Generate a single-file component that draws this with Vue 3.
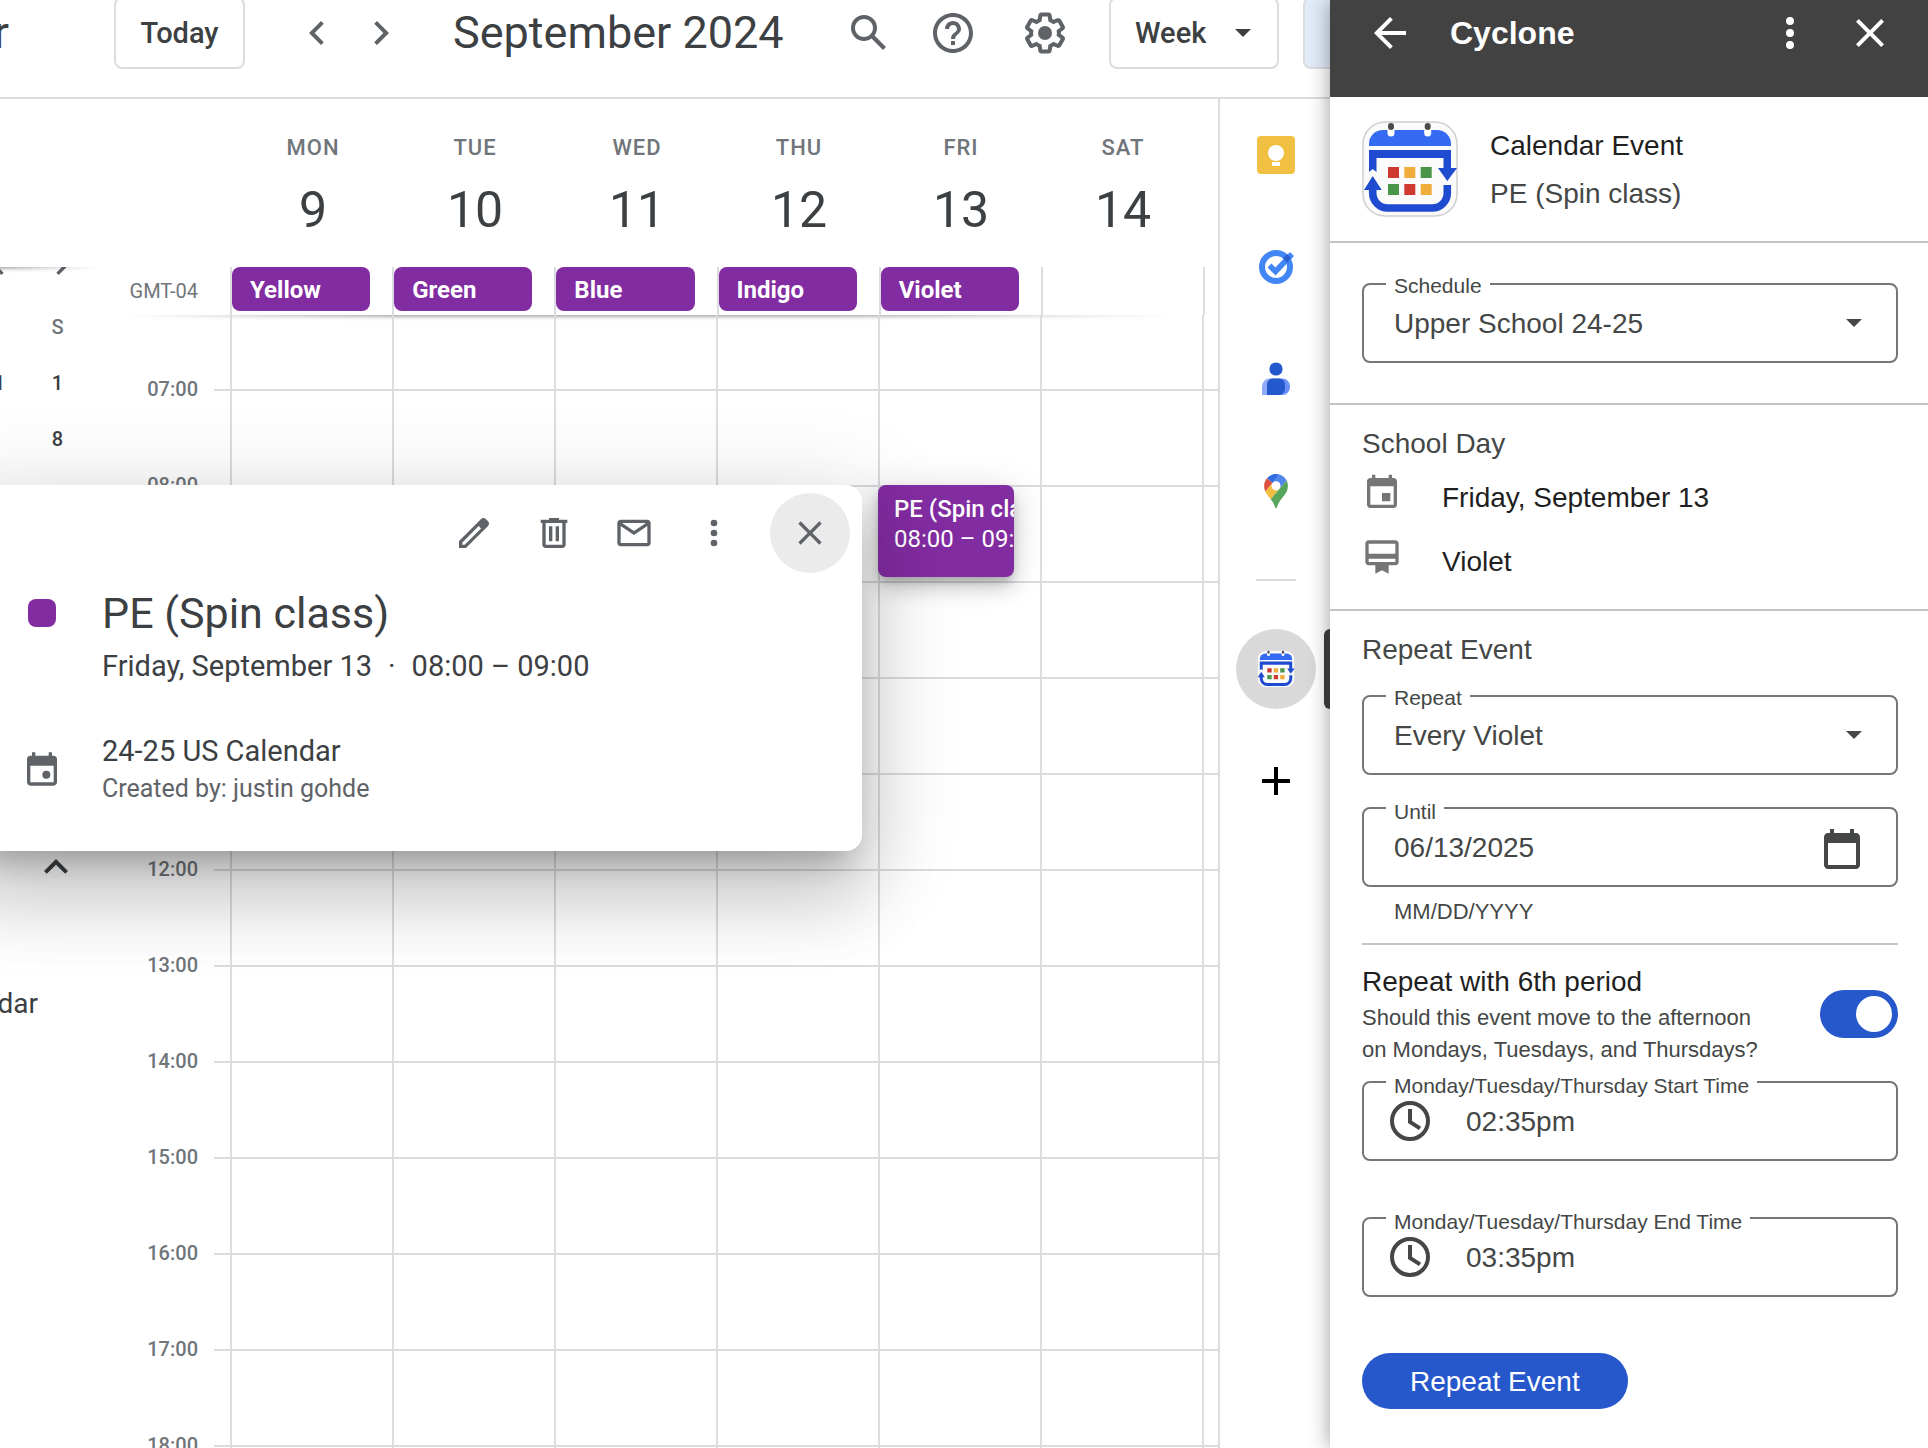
<script setup>
import { ref } from 'vue'

const days = [
  { name: 'MON', date: 9, cycle: 'Yellow' },
  { name: 'TUE', date: 10, cycle: 'Green' },
  { name: 'WED', date: 11, cycle: 'Blue' },
  { name: 'THU', date: 12, cycle: 'Indigo' },
  { name: 'FRI', date: 13, cycle: 'Violet', event: { title: 'PE (Spin class)', time: '08:00 – 09:00' } },
  { name: 'SAT', date: 14 },
]
const hours = Array.from({ length: 12 }, (_, i) => String(i + 7).padStart(2, '0') + ':00')

const view = ref('Week')
const schedule = ref('Upper School 24-25')
const repeat = ref('Every Violet')
const until = ref('06/13/2025')
const withSixth = ref(true)
const startTime = ref('02:35pm')
const endTime = ref('03:35pm')
</script>

<template>
  <div class="shell">
    <svg class="defs" aria-hidden="true">
      <symbol id="cyclone" viewBox="0 0 96 96">
        <rect x="1" y="1" width="94" height="94" rx="22" fill="#fbfbfb" stroke="#cfcfcf" stroke-width="1.5" />
        <path d="M7 25V23A14 14 0 0 1 21 9H75A14 14 0 0 1 89 23V25Z" fill="#356bf2" />
        <path d="M7 29H89V47H95L85.300 60 76 47H81.500V37H14.500V51L10.700 48 7 51Z" fill="#1f4bd0" />
        <path d="M10.700 66V72A15 15 0 0 0 25.700 87H70.300A15 15 0 0 0 85.300 72V64" fill="none" stroke="#1f4bd0" stroke-width="7.600" />
        <path d="M10.700 55 19.700 69H2Z" fill="#1f4bd0" />
        <path d="M29 6V12M65.700 6V12" stroke="#fff" stroke-width="7" stroke-linecap="round" />
        <path d="M29 5V6M65.700 5V6" stroke="#4a4a4a" stroke-width="6" stroke-linecap="round" />
        <path d="M26 46h11v11h-11zM42.300 63h11v11h-11z" fill="#cf3a30" />
        <path d="M42.300 46h11v11h-11zM58.700 63h11v11h-11z" fill="#f0ad3c" />
        <path d="M58.700 46h11v11h-11zM26 63h11v11h-11z" fill="#4a9648" />
      </symbol>
      <symbol id="chev-left" viewBox="0 0 24 24"><path d="M15.410 7.410 14 6l-6 6 6 6 1.410-1.410L10.830 12z" /></symbol>
      <symbol id="chev-right" viewBox="0 0 24 24"><path d="M8.590 16.590 13.170 12 8.590 7.410 10 6l6 6-6 6z" /></symbol>
      <symbol id="more" viewBox="0 0 24 24"><path d="M12 8a2 2 0 1 0 0-4 2 2 0 0 0 0 4zm0 2a2 2 0 1 0 0 4 2 2 0 0 0 0-4zm0 6a2 2 0 1 0 0 4 2 2 0 0 0 0-4z" /></symbol>
      <symbol id="close" viewBox="0 0 24 24"><path d="M19 6.410 17.590 5 12 10.590 6.410 5 5 6.410 10.590 12 5 17.590 6.410 19 12 13.410 17.590 19 19 17.590 13.410 12z" /></symbol>
      <symbol id="clock" viewBox="0 0 24 24">
        <circle cx="12" cy="12" r="9" fill="none" stroke="currentColor" stroke-width="2" />
        <path d="M12 6v6.500l5 3.200" fill="none" stroke="currentColor" stroke-width="2" />
      </symbol>
      <symbol id="drop" viewBox="0 0 16 8"><path d="M0 0h16L8 8z" /></symbol>
    </svg>

    <main class="calendar">
      <header class="topbar">
        <span class="brand">r</span>
        <button class="outlined today">Today</button>
        <button class="icon" aria-label="Previous week"><svg class="i48"><use href="#chev-left" /></svg></button>
        <button class="icon next" aria-label="Next week"><svg class="i48"><use href="#chev-right" /></svg></button>
        <h1>September 2024</h1>
        <div class="tools">
          <button class="icon" aria-label="Search">
            <svg class="i48" viewBox="0 0 24 24"><path d="M20.490 19l-5.730-5.730C15.530 12.200 16 10.910 16 9.500A6.500 6.500 0 1 0 9.500 16c1.410 0 2.700-.470 3.770-1.240L19 20.490 20.490 19zM5 9.500C5 7.010 7.010 5 9.500 5S14 7.010 14 9.500 11.990 14 9.500 14 5 11.990 5 9.500z" /></svg>
          </button>
          <button class="icon" aria-label="Help">
            <svg class="i48" viewBox="0 0 24 24"><path d="M11 18h2v-2h-2v2zm1-16C6.480 2 2 6.480 2 12s4.480 10 10 10 10-4.480 10-10S17.520 2 12 2zm0 18c-4.410 0-8-3.590-8-8s3.590-8 8-8 8 3.590 8 8-3.590 8-8 8zm0-14c-2.210 0-4 1.790-4 4h2c0-1.100.900-2 2-2s2 .900 2 2c0 2-3 1.750-3 5h2c0-2.250 3-2.500 3-5 0-2.210-1.790-4-4-4z" /></svg>
          </button>
          <button class="icon settings" aria-label="Settings">
            <svg class="i48" viewBox="0 0 24 24"><path d="M13.850 22.250h-3.700c-.740 0-1.360-.540-1.450-1.270l-.270-1.890c-.270-.140-.530-.290-.790-.460l-1.800.720c-.700.260-1.470-.030-1.810-.650L2.200 15.530c-.350-.660-.200-1.440.360-1.880l1.530-1.190c-.010-.150-.020-.300-.020-.460 0-.150.010-.310.020-.460l-1.520-1.190c-.590-.450-.740-1.260-.370-1.880l1.850-3.190c.340-.620 1.110-.900 1.790-.630l1.810.730c.260-.170.520-.320.780-.460l.270-1.910c.090-.700.710-1.250 1.440-1.250h3.700c.740 0 1.360.540 1.450 1.270l.270 1.890c.270.140.530.290.790.460l1.800-.720c.710-.260 1.480.030 1.820.650l1.840 3.180c.360.660.200 1.440-.360 1.880l-1.520 1.190c.010.150.020.300.020.460s-.010.310-.020.460l1.520 1.190c.560.450.720 1.230.370 1.860l-1.860 3.220c-.340.620-1.110.900-1.800.630l-1.800-.720c-.260.170-.520.320-.780.460l-.270 1.910c-.100.680-.720 1.220-1.460 1.220zm-3.230-2h2.760l.370-2.550.530-.220c.440-.180.880-.440 1.340-.780l.450-.340 2.380.960 1.380-2.400-2.030-1.580.070-.560c.030-.260.060-.510.060-.780s-.030-.530-.060-.780l-.070-.560 2.030-1.580-1.390-2.400-2.390.960-.450-.350c-.420-.320-.870-.580-1.330-.770l-.520-.220-.370-2.550h-2.760l-.370 2.550-.530.210c-.440.190-.880.440-1.340.790l-.450.330-2.380-.950-1.390 2.390 2.030 1.580-.070.560a7 7 0 0 0-.060.790c0 .260.020.530.060.780l.070.560-2.030 1.580 1.380 2.400 2.390-.960.450.350c.430.330.860.580 1.330.770l.530.220.380 2.550z" /><circle cx="12" cy="12" r="3.500" /></svg>
          </button>
          <div class="outlined view">
            <select v-model="view" aria-label="Calendar view"><option>Week</option></select>
            <svg class="drop"><use href="#drop" /></svg>
          </div>
          <button class="outlined mode" aria-label="Calendar"></button>
        </div>
      </header>

      <div class="body">
        <aside class="mini">
          <div class="mini-nav">
            <svg class="i40"><use href="#chev-left" /></svg>
            <svg class="i40"><use href="#chev-right" /></svg>
            <i class="fade"></i>
          </div>
          <div class="mini-grid">
            <span class="cut"></span><span class="dow">S</span>
            <span class="cut">1</span><span>1</span>
            <span class="cut"></span><span>8</span>
          </div>
          <button class="icon collapse" aria-label="Collapse">
            <svg class="i48" viewBox="0 0 24 24"><path d="M12 8l-6 6 1.410 1.410L12 10.830l4.590 4.580L18 14z" /></svg>
          </button>
          <span class="cal-name">dar</span>
        </aside>

        <section class="week">
          <div class="week-head">
            <div class="day-row">
              <div v-for="d in days" :key="d.name" class="day">
                <span class="dow">{{ d.name }}</span>
                <span class="num">{{ d.date }}</span>
              </div>
            </div>
            <div class="allday">
              <span class="tz">GMT-04</span>
              <div v-for="d in days" :key="d.name" class="cell">
                <button v-if="d.cycle" class="chip">{{ d.cycle }}</button>
              </div>
            </div>
            <i class="fade"></i>
          </div>
          <div class="grid">
            <div class="hours">
              <div v-for="h in hours" :key="h" class="hour"><span>{{ h }}</span><i></i></div>
            </div>
            <div class="cols">
              <div v-for="d in days" :key="d.name" class="col">
                <button v-if="d.event" class="event">
                  <b>{{ d.event.title }}</b>
                  <span>{{ d.event.time }}</span>
                </button>
              </div>
            </div>
          </div>
        </section>

        <nav class="rail">
          <button class="icon" aria-label="Keep">
            <svg width="38" height="38" viewBox="0 0 38 38"><rect width="38" height="38" rx="4" fill="#f1bf42" /><circle cx="19" cy="17" r="8" fill="#fff" /><path d="M15 22h8v2h-8zM15 26h8v4h-8z" fill="#fff" /></svg>
          </button>
          <button class="icon" aria-label="Tasks">
            <svg width="38" height="38" viewBox="0 0 38 38"><circle cx="19" cy="19" r="14" fill="none" stroke="#4285f4" stroke-width="6" /><path d="M12.500 17.500 18.500 23.500 35 6" fill="none" stroke="#4285f4" stroke-width="5.500" /><path d="M26 10l4 -4 4 4 -4 5z" fill="#2a5fd0" /></svg>
          </button>
          <button class="icon" aria-label="Contacts">
            <svg width="38" height="38" viewBox="0 0 38 38"><circle cx="19" cy="9" r="6.600" fill="#2359cc" /><path d="M13 18.500H19V35H5V26.500a8 8 0 0 1 8-8z" fill="#8faafa" /><path d="M19 18.500h6.500a7.500 7.500 0 0 1 7.500 7.500v1.500a7.500 7.500 0 0 1-7.500 7.500H19z" fill="#6b90f8" /><path d="M16 18.500h6a6 6 0 0 1 6 6V29a6 6 0 0 1-6 6H10V24.500a6 6 0 0 1 6-6z" fill="#2359cc" /></svg>
          </button>
          <button class="icon" aria-label="Maps">
            <svg width="24" height="34" viewBox="0 0 92.300 132.300"><path fill="#2f6de0" d="M60.200 2.200C55.800.800 51 0 46.100 0 32 0 19.300 6.400 10.800 16.500l21.800 18.300L60.200 2.200z" /><path fill="#dc5140" d="M10.800 16.500C4.100 24.500 0 34.900 0 46.100c0 8.700 1.700 15.700 4.600 22l28-33.300-21.800-18.300z" /><path fill="#5085ec" d="M46.200 28.500c9.800 0 17.700 7.900 17.700 17.700 0 4.300-1.600 8.300-4.200 11.400 0 0 13.900-16.600 27.500-32.700-5.600-10.800-15.300-19-27-22.700L32.600 34.800c3.300-3.800 8.100-6.300 13.600-6.300" /><path fill="#f2be42" d="M46.200 63.800c-9.800 0-17.700-7.900-17.700-17.700 0-4.300 1.500-8.300 4.100-11.300l-28 33.300c4.800 10.600 12.800 19.200 21 29.900l34.100-40.500c-3.300 3.900-8.100 6.300-13.500 6.300" /><path fill="#58a55c" d="M59.100 109.200c15.400-24.100 33.300-35 33.300-63 0-7.700-1.900-14.900-5.200-21.300L25.600 98c2.600 3.400 5.300 7.300 7.900 11.300 9.400 14.500 6.800 23.100 12.800 23.100s3.400-8.700 12.800-23.200" /></svg>
          </button>
          <hr />
          <button class="icon active" aria-label="Cyclone"><svg width="38" height="38"><use href="#cyclone" /></svg></button>
          <button class="icon" aria-label="Get add-ons">
            <svg width="28" height="28" viewBox="0 0 28 28"><path d="M14 0v28M0 14h28" stroke="#000" stroke-width="4" /></svg>
          </button>
        </nav>
      </div>

      <article class="popup">
        <div class="popup-bar">
          <button class="icon" aria-label="Edit"><svg class="i40" viewBox="0 0 24 24"><path d="M20.410 4.940l-1.350-1.350c-.780-.780-2.050-.780-2.830 0L3 16.820V21h4.180L20.410 7.770c.790-.780.790-2.050 0-2.830zm-14 14.120L5 19v-1.360l9.820-9.820 1.410 1.410-9.820 9.830z" /></svg></button>
          <button class="icon" aria-label="Delete"><svg class="i40" viewBox="0 0 24 24"><path d="M15 4V3H9v1H4v2h1v13c0 1.100.900 2 2 2h10c1.100 0 2-.900 2-2V6h1V4h-5zm2 15H7V6h10v13zM9 8h2v9H9zm4 0h2v9h-2z" /></svg></button>
          <button class="icon" aria-label="Email"><svg class="i40" viewBox="0 0 24 24"><path d="M20 4H4c-1.100 0-2 .900-2 2v12c0 1.100.900 2 2 2h16c1.100 0 2-.900 2-2V6c0-1.100-.900-2-2-2zm-.800 2L12 10.800 4.800 6h14.400zM4 18V7.870l8 5.330 8-5.330V18H4z" /></svg></button>
          <button class="icon" aria-label="Options"><svg class="i40"><use href="#more" /></svg></button>
          <button class="icon dismiss" aria-label="Close"><svg class="i40"><use href="#close" /></svg></button>
        </div>
        <div class="popup-row">
          <i class="swatch"></i>
          <h2>PE (Spin class)</h2>
        </div>
        <p class="when"><span>Friday, September 13</span><span>·</span><span>08:00 – 09:00</span></p>
        <div class="popup-row source">
          <svg class="i40" viewBox="0 0 24 24"><path d="M19 4h-1V2h-2v2H8V2H6v2H5c-1.100 0-2 .900-2 2v14c0 1.100.900 2 2 2h14c1.100 0 2-.900 2-2V6c0-1.100-.900-2-2-2zm0 16H5V10h14v10z" /><circle cx="14.600" cy="15.400" r="2.400" /></svg>
          <div>
            <p class="src-name">24-25 US Calendar</p>
            <p class="src-by">Created by: justin gohde</p>
          </div>
        </div>
      </article>
    </main>

    <aside class="panel">
      <i class="tab"></i>
      <header class="panel-head">
        <button class="icon" aria-label="Back"><svg class="i48" viewBox="0 0 24 24"><path d="M20 11H7.830l5.590-5.590L12 4l-8 8 8 8 1.410-1.410L7.830 13H20v-2z" /></svg></button>
        <h2>Cyclone</h2>
        <button class="icon" aria-label="Menu"><svg class="i48"><use href="#more" /></svg></button>
        <button class="icon" aria-label="Close panel"><svg class="i48"><use href="#close" /></svg></button>
      </header>

      <section class="summary">
        <svg width="96" height="96"><use href="#cyclone" /></svg>
        <div>
          <h3>Calendar Event</h3>
          <p>PE (Spin class)</p>
        </div>
      </section>

      <section class="schedule">
        <div class="field">
          <label for="schedule">Schedule</label>
          <select id="schedule" v-model="schedule"><option>Upper School 24-25</option></select>
          <svg class="drop"><use href="#drop" /></svg>
        </div>
      </section>

      <section class="stack">
        <h4>School Day</h4>
        <div class="fact">
          <svg class="i40" viewBox="0 0 24 24"><path d="M17 12h-5v5h5v-5zM16 1v2H8V1H6v2H5c-1.110 0-1.990.900-1.990 2L3 19c0 1.100.890 2 2 2h14c1.100 0 2-.900 2-2V5c0-1.100-.900-2-2-2h-1V1h-2zm3 18H5V8h14v11z" /></svg>
          <span>Friday, September 13</span>
        </div>
        <div class="fact">
          <svg class="i40" viewBox="0 0 24 24"><path d="M20 2H4c-1.110 0-2 .890-2 2v11c0 1.110.890 2 2 2h4v5l4-2 4 2v-5h4c1.110 0 2-.890 2-2V4c0-1.110-.890-2-2-2zm0 13H4v-2h16v2zm0-5H4V4h16v6z" /></svg>
          <span>Violet</span>
        </div>
      </section>

      <form class="stack last" @submit.prevent>
        <h4>Repeat Event</h4>
        <div class="field first">
          <label for="repeat">Repeat</label>
          <select id="repeat" v-model="repeat"><option>Every Violet</option></select>
          <svg class="drop"><use href="#drop" /></svg>
        </div>
        <div class="field entry until">
          <label for="until">Until</label>
          <input id="until" v-model="until" type="text" />
          <svg class="i48" viewBox="0 0 24 24"><path d="M16 2v2H8V2H6v2H5c-1.100 0-2 .900-2 2v14c0 1.100.900 2 2 2h14c1.100 0 2-.900 2-2V6c0-1.100-.900-2-2-2h-1V2h-2zm3 18H5V9h14v11z" /></svg>
        </div>
        <p class="hint">MM/DD/YYYY</p>
        <hr />
        <div class="switch-row">
          <label for="sixth">
            <span class="switch-title">Repeat with 6th period</span>
            <span class="switch-note">Should this event move to the afternoon<br />on Mondays, Tuesdays, and Thursdays?</span>
          </label>
          <input id="sixth" v-model="withSixth" type="checkbox" role="switch" />
        </div>
        <div class="field entry time">
          <label for="start">Monday/Tuesday/Thursday Start Time</label>
          <svg class="i48"><use href="#clock" /></svg>
          <input id="start" v-model="startTime" type="text" />
        </div>
        <div class="field entry time spaced">
          <label for="end">Monday/Tuesday/Thursday End Time</label>
          <svg class="i48"><use href="#clock" /></svg>
          <input id="end" v-model="endTime" type="text" />
        </div>
        <button class="submit" type="submit">Repeat Event</button>
      </form>
    </aside>
  </div>
</template>

<style>
body { background: #fff; }
</style>

<style scoped>
.shell {
  --line: #dadce0;
  --ink: #3c4043;
  --muted: #70757a;
  --purple: #822ca2;
  --blue: #2657cb;
  display: flex;
  height: 100vh;
  overflow: hidden;
  font-family: Roboto, "Liberation Sans", sans-serif;
  color: var(--ink);
}
.shell *, .shell *::after { box-sizing: border-box; }
.defs { position: absolute; width: 0; height: 0; }
h1, h2, h3, h4, p { margin: 0; font-weight: 400; }
svg { display: block; flex: none; fill: currentColor; }
.i48 { width: 48px; height: 48px; }
.i40 { width: 40px; height: 40px; }
.drop { width: 16px; height: 8px; pointer-events: none; }
button, select, input { font: inherit; color: inherit; }
.icon {
  display: flex;
  align-items: center;
  justify-content: center;
  flex: none;
  padding: 0;
  border: 0;
  background: none;
  color: #5f6368;
}

/* Calendar */
.calendar {
  position: relative;
  display: flex;
  flex: 1;
  flex-direction: column;
  min-width: 0;
  overflow: hidden;
}
.topbar {
  display: flex;
  flex: none;
  align-items: center;
  height: 99px;
  padding-bottom: 31px;
  border-bottom: 2px solid var(--line);
}
.brand {
  display: flex;
  justify-content: flex-end;
  width: 9px;
  margin-right: 105px;
  overflow: hidden;
  font-size: 45px;
  line-height: 52px;
}
.outlined {
  flex: none;
  height: 72px;
  padding: 0 24px;
  border: 2px solid var(--line);
  border-radius: 8px;
  background: #fff;
  font-size: 29px;
  font-weight: 500;
}
.today { width: 131px; margin-right: 48px; }
.next { margin-left: 16px; margin-right: 48px; }
h1 { font-size: 45px; line-height: 56px; white-space: nowrap; }
.tools { display: flex; align-items: center; gap: 36px; margin-left: auto; }
.settings { margin-left: 8px; }
.view {
  display: flex;
  align-items: center;
  width: 170px;
  margin-left: 4px;
  padding: 0 26px 0 0;
}
.view select {
  flex: 1;
  width: 0;
  height: 100%;
  padding: 0 0 0 24px;
  border: 0;
  appearance: none;
  background: none;
}
.mode {
  width: 27px;
  margin-left: -12px;
  padding: 0;
  border-right: 0;
  border-radius: 8px 0 0 8px;
  background: #e2ecf9;
}
.body { display: flex; flex: 1; min-height: 0; }

.mini { flex: none; width: 116px; padding-top: 168px; }
.mini-nav {
  position: relative;
  display: flex;
  gap: 24px;
  height: 10px;
  margin-left: -22px;
  overflow: hidden;
  color: #5f6368;
}
.mini-nav svg { margin-top: -22px; }
.fade {
  position: absolute;
  inset: auto 0 -6px;
  height: 6px;
  background: linear-gradient(rgba(0, 0, 0, 0.3), rgba(0, 0, 0, 0.05) 60%, transparent);
  mask-image: linear-gradient(90deg, transparent 1%, #000 25%, #000 65%, transparent 96%);
}
.mini-nav .fade {
  inset: 0 16px auto 0;
  mask-image: linear-gradient(90deg, #000 20%, transparent);
}
.mini-grid {
  display: grid;
  grid-template-columns: 5px 105px;
  grid-auto-rows: 56px;
  align-items: center;
  margin-top: 22px;
  font-size: 20px;
  font-weight: 500;
  text-align: center;
}
.mini-grid .cut { display: flex; justify-content: flex-end; overflow: hidden; }
.mini-grid .dow { color: var(--muted); }
.collapse { margin: 376px 0 92px 32px; color: var(--ink); }
.cal-name {
  display: flex;
  justify-content: flex-end;
  width: 38px;
  overflow: hidden;
  font-size: 28px;
  line-height: 42px;
}

.week { display: flex; flex: 1; flex-direction: column; min-width: 0; }
.week-head { position: relative; flex: none; }
.day-row {
  display: grid;
  grid-template-columns: repeat(6, 1fr);
  height: 168px;
  margin: 0 14px 0 116px;
  padding-top: 33px;
  text-align: center;
}
.day { display: flex; flex-direction: column; }
.day .dow { font-size: 22px; font-weight: 500; line-height: 32px; letter-spacing: 1px; color: var(--muted); }
.day .num { margin-top: 16px; font-size: 50px; line-height: 60px; }
.allday {
  display: grid;
  grid-template-columns: 114px repeat(6, 1fr);
  height: 48px;
  margin-right: 13px;
  border-right: 2px solid var(--line);
}
.tz { padding-right: 32px; font-size: 20px; line-height: 48px; text-align: right; color: var(--muted); }
.cell { border-left: 2px solid var(--line); padding-right: 22px; }
.chip {
  display: block;
  width: 100%;
  height: 44px;
  padding: 2px 18px 0;
  border: 0;
  border-radius: 8px;
  background: var(--purple);
  color: #fff;
  font-size: 24px;
  font-weight: 700;
  text-align: left;
}
.grid { display: grid; flex: 1; min-height: 0; overflow: hidden; }
.hours, .cols { grid-area: 1 / 1; }
.hours { padding-top: 74px; height: 0; }
.hour { display: flex; height: 96px; }
.hour span {
  width: 82px;
  height: 24px;
  margin: -12px 16px 0 0;
  font-size: 20px;
  font-weight: 500;
  line-height: 24px;
  text-align: right;
  color: var(--muted);
}
.hour i { flex: 1; height: 2px; background: var(--line); }
.cols {
  display: grid;
  grid-template-columns: repeat(6, 1fr);
  margin: 0 14px 0 114px;
  border-right: 2px solid var(--line);
}
.col { position: relative; border-left: 2px solid var(--line); }
.event {
  position: absolute;
  top: 170px;
  left: -2px;
  right: 26px;
  display: flex;
  flex-direction: column;
  height: 92px;
  padding: 9px 0 0 16px;
  border: 0;
  border-radius: 8px;
  overflow: hidden;
  background: var(--purple);
  box-shadow: 0 12px 20px rgba(0, 0, 0, 0.14), 0 2px 36px rgba(0, 0, 0, 0.12), 0 6px 10px -2px rgba(0, 0, 0, 0.2);
  color: #fff;
  font-size: 24px;
  line-height: 30px;
  text-align: left;
  white-space: nowrap;
}
.event b { font-weight: 500; }

.rail {
  display: flex;
  flex: none;
  flex-direction: column;
  align-items: center;
  gap: 32px;
  width: 112px;
  padding: 16px 0 0 2px;
  border-left: 2px solid var(--line);
}
.rail .icon { width: 80px; height: 80px; border-radius: 50%; }
.rail .active { background: #d9d9d9; }
.rail hr { width: 40px; height: 2px; margin: 16px 0; border: 0; background: var(--line); }

/* Event details */
.popup {
  position: absolute;
  top: 485px;
  left: -34px;
  width: 896px;
  padding: 8px 12px 44px 62px;
  border-radius: 16px;
  background: #fff;
  box-shadow: 0 48px 76px 6px rgba(0, 0, 0, 0.14), 0 18px 92px 16px rgba(0, 0, 0, 0.12), 0 22px 30px -14px rgba(0, 0, 0, 0.24);
}
.popup-bar { display: flex; justify-content: flex-end; margin-bottom: 12px; }
.popup-bar .icon { width: 80px; height: 80px; border-radius: 50%; }
.popup-bar .dismiss { margin-left: 16px; background: #ebebeb; }
.popup-row { display: flex; align-items: center; }
.swatch { width: 28px; height: 28px; margin-right: 46px; border-radius: 8px; background: var(--purple); }
.popup h2 { font-size: 43px; line-height: 56px; }
.when { display: flex; gap: 16px; padding-left: 74px; font-size: 29px; line-height: 50px; }
.source { margin-top: 40px; }
.source svg { margin: 0 40px 0 -6px; color: #5f6368; }
.src-name { font-size: 29px; line-height: 40px; }
.src-by { font-size: 25px; line-height: 36px; color: #5f6368; }

/* Add-on panel */
.panel {
  position: relative;
  flex: none;
  width: 598px;
  background: #fff;
  box-shadow: 0 0 20px rgba(0, 0, 0, 0.4);
  font-family: "Liberation Sans", Arial, sans-serif;
  font-size: 28px;
  color: #444746;
}
.tab { position: absolute; top: 629px; left: -6px; width: 6px; height: 80px; border-radius: 6px 0 0 6px; background: #363636; }
.panel-head {
  display: flex;
  align-items: center;
  height: 97px;
  padding: 0 34px 31px 36px;
  background: #424242;
  color: #fff;
}
.panel-head .icon { color: #fff; }
.panel-head .icon:last-child { margin-left: 32px; }
.panel-head h2 { flex: 1; margin-left: 36px; font-size: 32px; font-weight: 700; line-height: 40px; }
.panel section { border-bottom: 2px solid #c4c4c4; }
.summary { display: flex; gap: 32px; height: 146px; padding: 24px 30px 0 32px; line-height: 48px; }
.summary div { padding-top: 1px; }
.summary h3, .fact, .switch-title { font-size: 28px; color: #1f1f1f; }
.schedule { padding: 40px 30px 40px 32px; }
.stack { padding: 17px 30px 15px 32px; }
h4 { font-size: 28px; line-height: 44px; }
.fact { display: flex; align-items: center; gap: 40px; height: 64px; }
.fact svg { margin-bottom: 10px; color: #757575; }
.field {
  position: relative;
  display: flex;
  align-items: center;
  height: 80px;
  border: 2px solid #747775;
  border-radius: 8px;
}
.field label {
  position: absolute;
  top: -11px;
  left: 22px;
  padding: 0 8px;
  background: #fff;
  font-size: 21px;
  line-height: 24px;
}
.entry label { top: -9px; }
.field select, .field input {
  flex: 1;
  width: 0;
  height: 100%;
  padding: 0 0 0 30px;
  border: 0;
  outline: 0;
  appearance: none;
  background: none;
}
.field input { padding-top: 2px; }
.field .drop { margin-right: 34px; }
.first { margin-top: 23px; }
.until { margin-top: 32px; }
.until svg { margin: 4px 30px 0 0; }
.hint { margin: 9px 32px 15px; font-size: 22px; line-height: 32px; }
.last hr { height: 2px; margin: 0 0 17px; border: 0; background: #c4c4c4; }
.switch-row { display: flex; align-items: center; justify-content: space-between; }
.switch-title, .switch-note { display: block; }
.switch-title { line-height: 40px; }
.switch-note { font-size: 22px; line-height: 32px; }
.switch-row input {
  flex: none;
  width: 78px;
  height: 48px;
  margin: 0;
  padding: 6px;
  border-radius: 24px;
  appearance: none;
  background: #80868b;
}
.switch-row input::after { content: ""; display: block; width: 36px; height: 36px; border-radius: 50%; background: #fff; }
.switch-row input:checked { background: var(--blue); }
.switch-row input:checked::after { margin-left: auto; }
.time { margin-top: 15px; }
.time svg { margin-left: 22px; }
.field.time input { padding-left: 32px; }
.spaced { margin-top: 56px; }
.submit {
  height: 56px;
  margin-top: 56px;
  padding: 2px 48px 0;
  border: 0;
  border-radius: 28px;
  background: var(--blue);
  color: #fff;
}
</style>
